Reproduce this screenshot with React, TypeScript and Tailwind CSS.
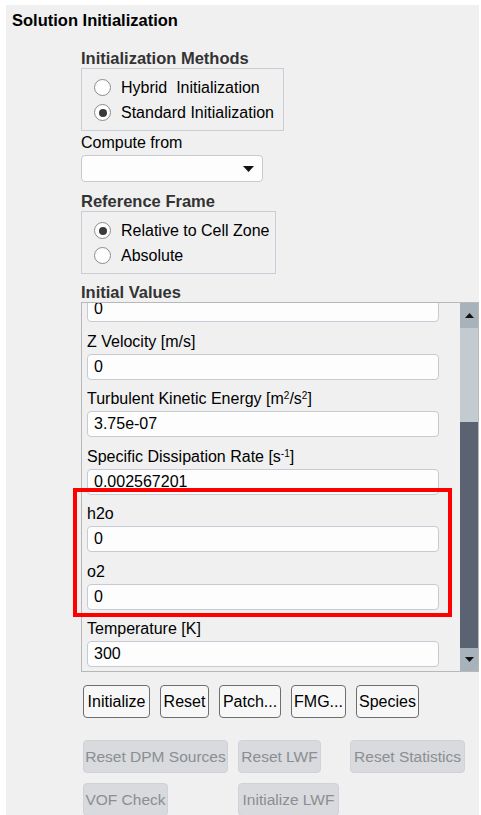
const font = { fontFamily: "Tahoma, 'Liberation Sans', Arial, sans-serif" }

function Radio({ checked, label }: { checked?: boolean; label: string }) {
  return (
    <div className="flex h-[25px] items-center">
      <span className="flex h-[17px] w-[17px] items-center justify-center rounded-full border border-[#8c8c8c] bg-white">
        {checked && <span className="h-[8px] w-[8px] rounded-full bg-[#3a3a3a]" />}
      </span>
      <span className="ml-[10px] whitespace-pre text-[16px] text-black">{label}</span>
    </div>
  )
}

function Field({ label, value }: { label: React.ReactNode; value: string }) {
  return (
    <div className="flex flex-col">
      <div className="h-[20px] text-[16px] leading-[20px] text-black">{label}</div>
      <div className="mt-[2px] flex h-[26px] w-[352px] items-center rounded-[4px] border border-[#c6cbd3] bg-[#fdfdfd] pl-[6px] text-[16px] text-black">
        {value}
      </div>
    </div>
  )
}

function Btn({ label, w }: { label: string; w: string }) {
  return (
    <button
      className={`flex h-[33px] items-center justify-center rounded-[4px] border border-[#6e6e6e] bg-[#f7f7f7] text-[16px] text-black ${w}`}
    >
      {label}
    </button>
  )
}

function DisabledBtn({ label, w }: { label: string; w: string }) {
  return (
    <div
      className={`flex h-[33px] items-center justify-center whitespace-nowrap rounded-[4px] border border-[#cfd2d6] bg-[#d8dadd] text-[15.5px] text-[#8b8e92] ${w}`}
    >
      {label}
    </div>
  )
}

export default function App() {
  return (
    <div className="relative h-[815px] w-[481px] overflow-hidden bg-white pl-[6px] pr-[2px] pt-[5px]" style={font}>
      <div className="h-[810px] bg-[#f0f0f0] pl-[6px] pt-[5px]">
        <div className="h-[20px] text-[16.5px] font-bold leading-[20px] text-black">Solution Initialization</div>

        <div className="ml-[69px] mt-[18px] flex flex-col">
          <div className="h-[20px] text-[16.5px] font-bold leading-[20px] text-[#333]">Initialization Methods</div>
          <div className="w-[203px] border border-[#c9ced6] pb-[5px] pl-[12px] pt-[6px]">
            <Radio label="Hybrid  Initialization" />
            <Radio checked label="Standard Initialization" />
          </div>

          <div className="mt-[2px] h-[20px] text-[16px] leading-[20px] text-black">Compute from</div>
          <div className="mt-[2px] flex h-[27px] w-[182px] items-center justify-end rounded-[4px] border border-[#c6cbd3] bg-[#fdfdfd] pr-[8px]">
            <svg width="11" height="6" viewBox="0 0 11 6">
              <path d="M0 0 H11 L5.5 6 Z" fill="#111" />
            </svg>
          </div>

          <div className="mt-[9px] h-[20px] text-[16.5px] font-bold leading-[20px] text-[#333]">Reference Frame</div>
          <div className="w-[195px] border border-[#c9ced6] pb-[5px] pl-[12px] pt-[6px]">
            <Radio checked label="Relative to Cell Zone" />
            <Radio label="Absolute" />
          </div>

          <div className="mt-[8px] h-[20px] text-[16.5px] font-bold leading-[20px] text-[#333]">Initial Values</div>
          <div className="flex h-[370px] w-[398px] border border-[#b8b8b8] bg-[#f0f0f0]">
            <div className="flex-1 overflow-hidden pl-[5px]">
              <div className="mt-[-29px] flex flex-col gap-[9.5px]">
                <Field label="Y Velocity [m/s]" value="0" />
                <Field label="Z Velocity [m/s]" value="0" />
                <Field
                  label={
                    <>
                      Turbulent Kinetic Energy [m<sup className="text-[10px]">2</sup>/s<sup className="text-[10px]">2</sup>]
                    </>
                  }
                  value="3.75e-07"
                />
                <Field
                  label={
                    <>
                      Specific Dissipation Rate [s<sup className="text-[10px]">-1</sup>]
                    </>
                  }
                  value="0.002567201"
                />
                <Field label="h2o" value="0" />
                <Field label="o2" value="0" />
                <Field label="Temperature [K]" value="300" />
              </div>
            </div>
            <div className="flex w-[18px] flex-col">
              <div className="flex h-[25px] items-center justify-center bg-[#a8b2ba]">
                <svg width="9" height="5" viewBox="0 0 9 5">
                  <path d="M0 5 H9 L4.5 0 Z" fill="#111" />
                </svg>
              </div>
              <div className="h-[94px] bg-[#c3cbd1]" />
              <div className="flex-1 bg-[#5b6272]" />
              <div className="flex h-[23px] items-center justify-center bg-[#a8b2ba]">
                <svg width="9" height="5" viewBox="0 0 9 5">
                  <path d="M0 0 H9 L4.5 5 Z" fill="#111" />
                </svg>
              </div>
            </div>
          </div>

          <div className="ml-[2px] mt-[13px] flex gap-[10px]">
            <Btn label="Initialize" w="w-[67px]" />
            <Btn label="Reset" w="w-[49px]" />
            <Btn label="Patch..." w="w-[62px]" />
            <Btn label="FMG..." w="w-[55px]" />
            <Btn label="Species" w="w-[63px]" />
          </div>

          <div className="ml-[2px] mt-[22px] grid grid-cols-[155px_112px_auto] gap-y-[10px]">
            <DisabledBtn label="Reset DPM Sources" w="w-[145px]" />
            <DisabledBtn label="Reset LWF" w="w-[83px]" />
            <DisabledBtn label="Reset Statistics" w="w-[115px]" />
            <DisabledBtn label="VOF Check" w="w-[85px]" />
            <DisabledBtn label="Initialize LWF" w="w-[101px]" />
          </div>
        </div>
      </div>

      <div className="absolute left-[73px] top-[488px] h-[129px] w-[379px] border-[4px] border-[#ff0000]" />
    </div>
  )
}
